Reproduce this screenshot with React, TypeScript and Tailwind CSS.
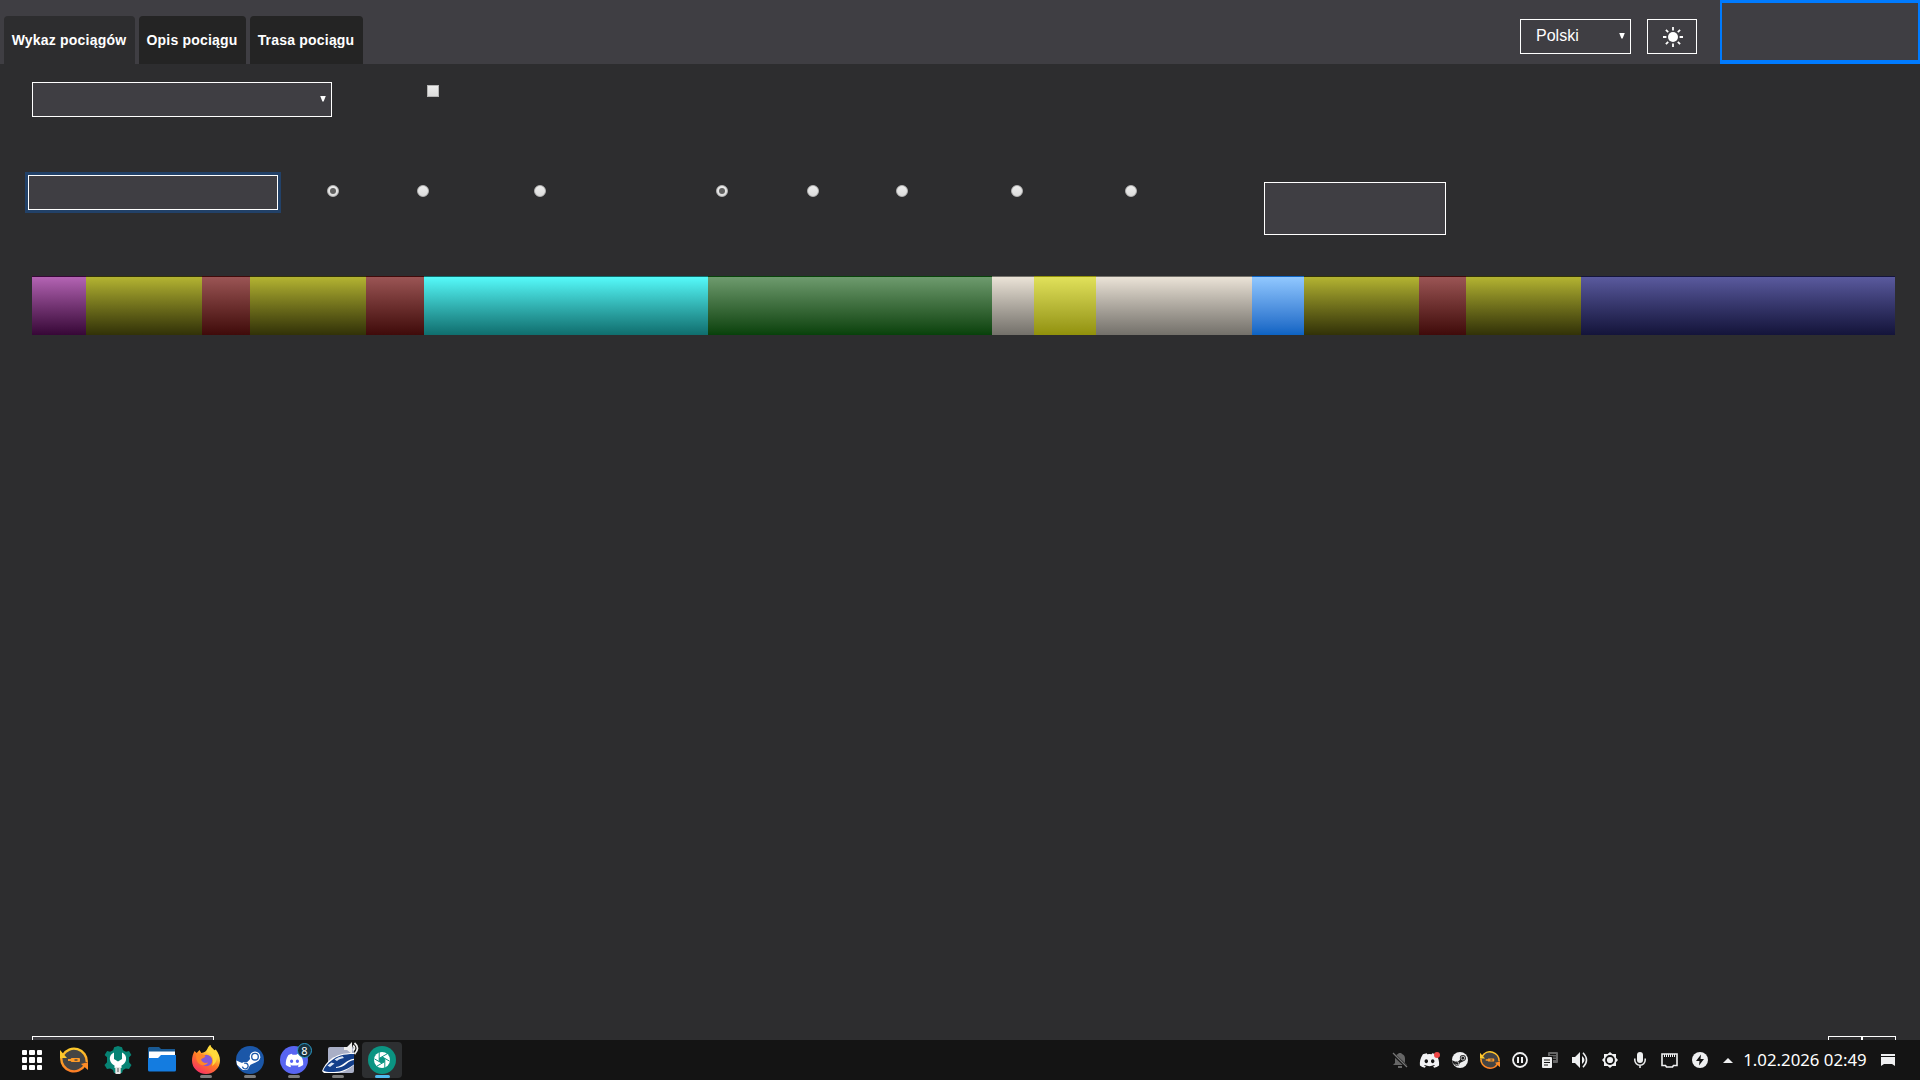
import type { ReactNode } from 'react';
import { FaDiscord } from 'react-icons/fa';

const tabs = [
  { label: 'Wykaz pociągów', className: 'w-[131px] bg-[#2d2d2f]' },
  { label: 'Opis pociągu', className: 'w-[107px] bg-[#242424]' },
  { label: 'Trasa pociągu', className: 'w-[113px] bg-[#242424]' },
];

const segments = [
  'w-[54px] from-[#b464b4] to-[#370737]',
  'w-[116px] from-[#b4b432] to-[#323208]',
  'w-[48px] from-[#9b5555] to-[#3f0a0a]',
  'w-[116px] from-[#b4b432] to-[#323208]',
  'w-[58px] from-[#9b5555] to-[#3f0a0a]',
  'w-[284px] from-[#55fafa] to-[#0f6e6e]',
  'w-[284px] from-[#6e9b6e] to-[#07410a]',
  'w-[42px] from-[#ebe3d7] to-[#73706a]',
  'w-[62px] from-[#e1e15a] to-[#91910a]',
  'w-[156px] from-[#ebe3d7] to-[#73706a]',
  'w-[52px] from-[#91c8ff] to-[#0c63c3]',
  'w-[115px] from-[#b4b432] to-[#323208]',
  'w-[47px] from-[#9b5555] to-[#3f0a0a]',
  'w-[115px] from-[#b4b432] to-[#323208]',
  'w-[314px] from-[#5a5a9e] to-[#14143a]',
];

function Radio({ checked = false, className = '' }: { checked?: boolean; className?: string }) {
  return (
    <span
      role="radio"
      aria-checked={checked}
      className={`mt-[10px] flex h-3 w-3 shrink-0 items-center justify-center rounded-full border border-[#b4b4b4] bg-linear-to-b from-[#ededed] to-[#dcdcdc] ${className}`}
    >
      {checked && <span className="h-1.5 w-1.5 rounded-full bg-[#606060]" />}
    </span>
  );
}

function Arrow() {
  return (
    <svg width="6" height="6" viewBox="0 0 6 6" fill="#fff">
      <path d="M.2 0h5.6L3.6 5.5H2.4z" />
    </svg>
  );
}

function SunIcon() {
  return (
    <svg width="20" height="20" viewBox="0 0 20 20" stroke="#fff" strokeWidth="1.8">
      <circle cx="10" cy="10" r="5" fill="#fff" stroke="none" />
      <path d="M10 0v3.4M10 16.6V20M0 10h3.4M16.6 10H20M2.9 2.9l2.3 2.3M14.8 14.8l2.3 2.3M2.9 17.1l2.3-2.3M14.8 5.2l2.3-2.3" />
    </svg>
  );
}

function UpdateIcon({ size }: { size: number }) {
  return (
    <svg width={size} height={size} viewBox="0 0 28 28">
      <defs>
        <linearGradient id="update" x1="0" y1="0" x2="0" y2="1">
          <stop offset="0" stopColor="#fdc92b" />
          <stop offset="1" stopColor="#fd7e25" />
        </linearGradient>
      </defs>
      <circle cx="14" cy="14" r="12" fill="#444" />
      <path d="M3 9A12.7 12.7 0 0 1 26.7 16M25 19A12.7 12.7 0 0 1 1.3 12" fill="none" stroke="url(#update)" strokeWidth="2.4" />
      <path d="M0 4v8h7z" fill="#fdc92b" />
      <path d="M28 16v8l-7-6z" fill="#fd8b27" />
      <path d="M8 13h2.5l1-1H19a1 1 0 0 1 1 1v2a1 1 0 0 1-1 1h-7.5l-1-1H8z" fill="#fd9a27" />
      <path d="M14.500 13.300h3v1.400h-3z" fill="#444" />
    </svg>
  );
}

function ToolsIcon() {
  return (
    <svg width="28" height="28" viewBox="0 0 28 28">
      <path
        d="M14 0l4 1.2 1 3 3 1.5 3-.8 2.4 4-2.3 2.4v5l2.4 2.8-2.5 4-3.2-.7-2.8 1.7-1 3h-8l-1-3-2.8-1.7-3.2.7-2.5-4L3 16.3v-5L.6 8.9l2.5-4 3 .8 3-1.5 1-3z"
        fill="#078374"
      />
      <path
        d="M10 6.5V13l4 2.5 4-2.5V6.5c3.5 1.7 4.5 4.6 4 7.5-.5 2.5-2.2 4.300-4.500 5.500V22h-7v-2.500C8.200 18.300 6.500 16.500 6 14c-.5-2.900.5-5.800 4-7.500z"
        fill="#fff"
      />
      <path d="M11.300 21h5.400v6a2.700 1.500 0 0 1-5.400 0z" fill="#e6e6e6" />
      <path d="M13.300 22h1.400v4h-1.400z" fill="#777" />
    </svg>
  );
}

function FolderIcon() {
  return (
    <svg className="-mt-0.5" width="28" height="26" viewBox="0 0 28 26">
      <path d="M1 1h10l2 2h14v12H0V2z" fill="#195a94" />
      <path d="M1 5.500h26V15H1z" fill="#fff" />
      <path d="M0 12h10l3-3h15v15a1.500 1.500 0 0 1-1.500 1.500h-25A1.500 1.500 0 0 1 0 24z" fill="#147ce0" />
    </svg>
  );
}

function FirefoxIcon() {
  return (
    <svg className="-mt-0.5" width="28" height="29" viewBox="0 0 28 29">
      <defs>
        <linearGradient id="fox" x1=".8" y1=".1" x2=".25" y2="1">
          <stop offset=".2" stopColor="#ffd83b" />
          <stop offset=".5" stopColor="#ff7a24" />
          <stop offset="1" stopColor="#f72d67" />
        </linearGradient>
      </defs>
      <path
        d="M2.500 6l2.200 2L7.500 5l1.800 3c3-.4 5-1.800 6-4 .7-1.600 1.500-3 3-4 .3 2.500 2 4 3.500 5.500l2-1c2.500 3 4.200 7 4.200 11A14 13.500 0 0 1 0 15.500C0 12 1 9 2.500 6z"
        fill="url(#fox)"
      />
      <path d="M18.300 0c.3 3 6.700 5 6.700 12 0 4-2 7-5 9 3-9-1-13-5-16 1.500-1 1.800-4 3.300-5z" fill="#ffd93c" />
      <circle cx="14.500" cy="15.500" r="5.700" fill="#8358d7" />
      <path d="M4 9c4-1 7 0 9.500 2-1 2-3 2-4.500 3.500 1 3 4 4 7 3-2 4-9 3.500-11-1.500C4.200 13.500 4 11 4 9z" fill="#ff8629" />
    </svg>
  );
}

function SteamLogo({ size, disc, mark }: { size: number; disc: string; mark: string }) {
  return (
    <svg width={size} height={size} viewBox="0 0 28 28">
      <circle cx="14" cy="14" r="14" fill={disc} />
      <path d="M.3 14.500L9 18.300l4.500-4.500 5-7.300 6 5-4.500 4.800-5.500 2.500-3 4.500-4.500.7-3.200-2.500L1 18.700z" fill={mark} />
      <circle cx="19" cy="10.700" r="5.300" fill={mark} />
      <circle cx="19" cy="10.700" r="3.300" fill="none" stroke={disc} strokeWidth="1.300" />
      <circle cx="9" cy="20" r="4" fill={mark} />
      <path d="M6.400 20.700a2.900 2.900 0 1 0 1.800-3.400" fill="none" stroke={disc} strokeWidth="1.300" />
    </svg>
  );
}

function DiscordApp() {
  return (
    <span className="relative flex h-7 w-7 items-center justify-center rounded-full bg-[#5865f2]">
      <FaDiscord size={19} color="#fff" />
      <span className="absolute -top-[3px] left-[17px] flex h-[15px] w-[15px] items-center justify-center rounded-full border border-[#2b9bc9] bg-[#16313e] font-['Noto_Sans',sans-serif] text-[11px] leading-none text-white">
        8
      </span>
    </span>
  );
}

function TrainIcon() {
  return (
    <svg className="mb-1 ml-1.5 shrink-0" width="38" height="32" viewBox="0 0 38 32">
      <rect x="6" y="5" width="26" height="26" rx="2" fill="#a9afc6" />
      <path d="M0 29c2-5 5-9 9-12 6-4 12-6 23-6v12c-5 4-10 7-17 8H2z" fill="#fff" />
      <path d="M1.200 28.500C3 24.500 6 21 9.500 18.500 15 14 21 12 32 12v10.500C26 27 20 29.800 12 30c-5 .3-9-.3-10.800-1.500z" fill="#143f8a" />
      <path d="M12.500 17.600c3-2 5-2.800 8-3.300l1.500 1.700c-3 .4-5 1.300-7 3z" fill="#dce6f5" />
      <path d="M5.500 23.500l4-3 3 1-4.500 3.500z" fill="#dce6f5" />
      <path d="M14 25c4-.5 6-2 9-4.300s5-3.300 9-4v1.300c-3 .5-5 1.500-7.500 3.700-3 2.500-6 3.800-10.500 4.300z" fill="#fff" />
      <path d="M22 5h3l5-5v12l-5-4h-3z" fill="#eee" />
      <path d="M31 3.500q3 2.500 0 5M32.500 1q6 5 0 11" fill="none" stroke="#eee" strokeWidth="1.800" />
    </svg>
  );
}

function ShutterIcon() {
  return (
    <svg width="28" height="28" viewBox="0 0 28 28">
      <circle cx="14" cy="14" r="14" fill="#0b9482" />
      <circle cx="14" cy="14" r="8" fill="#fff" />
      <path d="M14 10.800l2.800 1.600v3.200L14 17.200l-2.800-1.600v-3.200z" fill="#0b9482" />
      <path
        d="M14 10.800l7.500 4.300M16.800 12.400V22M16.800 15.600l-8 4.600M14 17.200l-7.500-4.300M11.200 15.600V6M11.200 12.400l8-4.600"
        stroke="#0b9482"
        strokeWidth="1"
      />
    </svg>
  );
}

function TaskButton({ children, state }: { children: ReactNode; state?: 'open' | 'active' }) {
  return (
    <div
      className={`relative flex h-9 w-10 shrink-0 items-center justify-center rounded ${state === 'active' ? 'bg-[#2d2f31]' : ''}`}
    >
      {children}
      {state && (
        <span
          className={`absolute bottom-0 h-[3px] rounded-full ${state === 'active' ? 'w-[15px] bg-[#4fbcf0]' : 'w-3 bg-[#7d7d7d]'}`}
        />
      )}
    </div>
  );
}

function Tray({ children }: { children: ReactNode }) {
  return <div className="flex h-6 w-[30px] shrink-0 items-center justify-center">{children}</div>;
}

function SystemTray() {
  return (
    <div className="flex items-center text-[#eff0f1]">
      <Tray>
        <svg width="16" height="16" viewBox="0 0 16 16" fill="#666">
          <path d="M1 13l2-2V6.500a5 5 0 0 1 3.500-4.700V1h3v.8A5 5 0 0 1 13 6.500V11l2 2zM6 14h4v2H6z" />
          <path d="M0 1l15 14" stroke="#141414" strokeWidth="3" />
          <path d="M1 1l14 14" stroke="#777" strokeWidth="1.300" />
        </svg>
      </Tray>
      <Tray>
        <span className="relative -ml-0.5">
          <FaDiscord size={21} color="#f2f2f4" />
          <span className="absolute top-0.5 right-0 h-1.5 w-1.5 rounded-full bg-[#f04747]" />
        </span>
      </Tray>
      <Tray>
        <SteamLogo size={16} disc="#eff0f1" mark="#202020" />
      </Tray>
      <Tray>
        <UpdateIcon size={20} />
      </Tray>
      <Tray>
        <svg width="16" height="16" viewBox="0 0 16 16" fill="currentColor">
          <circle cx="8" cy="8" r="7" fill="none" stroke="currentColor" strokeWidth="1.800" />
          <path d="M5 5h2v6H5zM9 5h2v6H9z" />
        </svg>
      </Tray>
      <Tray>
        <svg width="16" height="16" viewBox="0 0 16 16">
          <rect x="6" width="10" height="11" rx="1" fill="#666" />
          <path d="M8 2.500h6M8 5h6M8 7.500h6" stroke="#141414" />
          <rect x="-1" y="4" width="12" height="13" fill="#141414" />
          <rect y="5" width="10" height="11" rx="1" fill="#eff0f1" />
          <path d="M2 8h6M2 10.500h6M2 13h4" stroke="#141414" />
        </svg>
      </Tray>
      <Tray>
        <svg width="18" height="16" viewBox="0 0 18 16" fill="currentColor">
          <path d="M1 5h3l5-5v16l-5-5H1zM11 4q5 4 0 8z" />
          <path d="M12 .7q7 7.300 0 14.600" fill="none" stroke="currentColor" strokeWidth="1.500" />
        </svg>
      </Tray>
      <Tray>
        <svg width="16" height="16" viewBox="0 0 16 16" fill="currentColor">
          <path d="M8 0l2.300 2H14v3.700L16 8l-2 2.300V14h-3.700L8 16l-2.300-2H2v-3.700L0 8l2-2.300V2h3.700z" />
          <circle cx="8" cy="8" r="4" fill="none" stroke="#141414" strokeWidth="1.800" />
        </svg>
      </Tray>
      <Tray>
        <svg width="12" height="16" viewBox="0 0 12 16" fill="none" stroke="currentColor" strokeWidth="1.500">
          <rect x="3" width="6" height="11" rx="3" fill="currentColor" stroke="none" />
          <path d="M.8 6.500V8a5.200 5.200 0 0 0 10.400 0V6.500M6 13v3" />
        </svg>
      </Tray>
      <Tray>
        <svg className="-ml-px" width="17" height="15" viewBox="0 0 17 15" fill="none" stroke="currentColor" strokeWidth="1.600">
          <path d="M1 1h15v11.500h-3.500l-1 1.500h-6l-1-1.500H1z" />
          <path d="M3.500 1v3M5.500 1v3M7.500 1v3M9.500 1v3M11.500 1v3M13.500 1v3" strokeWidth="1" />
        </svg>
      </Tray>
      <Tray>
        <svg width="16" height="16" viewBox="0 0 16 16">
          <circle cx="8" cy="8" r="8" fill="#eff0f1" />
          <path d="M9 2.500L4 9h3.500L7 13.500 12 7H8.500z" fill="#141414" />
        </svg>
      </Tray>
      <div className="flex w-[26px] justify-center">
        <svg width="10" height="5" viewBox="0 0 10 5" fill="currentColor">
          <path d="M0 5l5-5 5 5z" />
        </svg>
      </div>
      <span className="ml-px w-[126px] text-center font-['Noto_Sans',sans-serif] text-[16.8px] leading-6 whitespace-nowrap text-white">
        1.02.2026 02:49
      </span>
      <svg className="mr-[25px] ml-[13px]" width="14" height="12" viewBox="0 0 14 12" fill="currentColor">
        <path d="M0 0h14v2H0zM0 3h14v9l-3-2H3l-3 2z" />
      </svg>
    </div>
  );
}

export default function App() {
  return (
    <div className="flex h-[1080px] w-[1920px] flex-col overflow-hidden bg-[#2d2d2f] font-['Liberation_Sans',Arial,sans-serif] text-white">
      <header className="flex h-16 shrink-0 items-end justify-between bg-[#3f3e43] pl-1">
        <nav className="flex gap-1">
          {tabs.map((tab) => (
            <button
              key={tab.label}
              className={`h-12 rounded-t pr-px pb-px text-sm font-bold tracking-[0.2px] whitespace-nowrap ${tab.className}`}
            >
              {tab.label}
            </button>
          ))}
        </nav>
        <div className="flex h-16">
          <button className="mt-[19px] flex h-[35px] w-[111px] items-center justify-between border border-white pr-[5px] pb-0.5 pl-[15px] text-base">
            Polski
            <Arrow />
          </button>
          <button className="mt-[19px] ml-4 flex h-[35px] w-[50px] items-center justify-center border border-white pl-0.5">
            <SunIcon />
          </button>
          <button className="ml-[23px] h-16 w-[200px] border-x-2 border-t-[3px] border-b-4 border-[#007bff]" />
        </div>
      </header>

      <main className="flex grow flex-col overflow-hidden">
        <section className="flex pt-[18px] pl-8">
          <button className="flex h-[35px] w-[300px] items-center justify-end border border-white bg-[#3f3e43] pr-[5px] pb-0.5">
            <Arrow />
          </button>
          <span
            role="checkbox"
            aria-checked={false}
            className="mt-[3px] ml-[95px] h-3 w-3 border border-[#b4b4b4] bg-linear-to-b from-[#ededed] to-[#dcdcdc]"
          />
        </section>

        <section className="mt-[58px] flex h-[101px] pl-7">
          <input
            type="text"
            className="h-[35px] w-[250px] border border-white bg-[#3f3e43] ring-3 ring-[#224168] outline-none"
          />
          <Radio checked className="ml-[49px]" />
          <Radio className="ml-[78px]" />
          <Radio className="ml-[105px]" />
          <Radio checked className="ml-[170px]" />
          <Radio className="ml-[79px]" />
          <Radio className="ml-[77px]" />
          <Radio className="ml-[103px]" />
          <Radio className="ml-[102px]" />
          <button className="mt-[7px] ml-[127px] h-[53px] w-[182px] border border-white bg-[#3f3e43]" />
        </section>

        {/* Coloured route header */}
        <section className="flex h-[59px] shrink-0 pl-8">
          {segments.map((segment, i) => (
            <div key={i} className={`shrink-0 border-t border-transparent bg-linear-to-b ${segment}`} />
          ))}
        </section>

        <footer className="mt-auto flex h-1 shrink-0 justify-between pr-6 pl-8">
          <div className="w-[182px] border-x border-t border-white bg-[#3f3e43]" />
          <div className="flex">
            <div className="w-[34px] border-x border-t border-white" />
            <div className="w-[34px] border-x border-t border-white" />
          </div>
        </footer>
      </main>

      <div className="flex h-10 shrink-0 items-center justify-between bg-[#141414]">
        <div className="flex items-center pl-3">
          <div className="mr-0.5 flex h-9 w-10 items-center justify-center">
            <div className="grid grid-cols-3 gap-0.5">
              {Array.from({ length: 9 }, (_, i) => (
                <span key={i} className="h-[5.4px] w-[5.4px] rounded-[1px] bg-white" />
              ))}
            </div>
          </div>
          <div className="flex items-center gap-1">
            <TaskButton>
              <UpdateIcon size={28} />
            </TaskButton>
            <TaskButton>
              <ToolsIcon />
            </TaskButton>
            <TaskButton>
              <FolderIcon />
            </TaskButton>
            <TaskButton state="open">
              <FirefoxIcon />
            </TaskButton>
            <TaskButton state="open">
              <SteamLogo size={28} disc="#1b57a8" mark="#fff" />
            </TaskButton>
            <TaskButton state="open">
              <DiscordApp />
            </TaskButton>
            <TaskButton state="open">
              <TrainIcon />
            </TaskButton>
            <TaskButton state="active">
              <ShutterIcon />
            </TaskButton>
          </div>
        </div>
        <SystemTray />
      </div>
    </div>
  );
}
